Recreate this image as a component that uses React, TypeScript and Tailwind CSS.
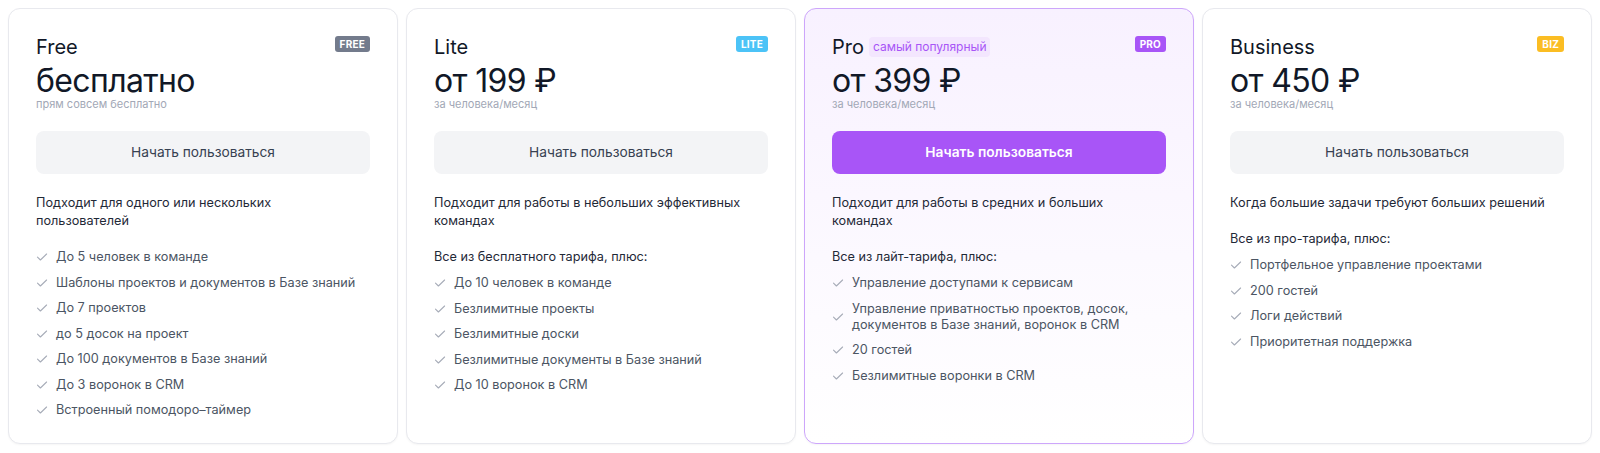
import React from "react";

type Plan = {
  name: string;
  badge: string;
  badgeClass: string;
  price: string;
  sub: string;
  desc: string;
  heading?: string;
  items: string[];
  pro?: boolean;
};

const plans: Plan[] = [
  {
    name: "Free",
    badge: "FREE",
    badgeClass: "bg-[#737b8c]",
    price: "бесплатно",
    sub: "прям совсем бесплатно",
    desc: "Подходит для одного или нескольких пользователей",
    items: [
      "До 5 человек в команде",
      "Шаблоны проектов и документов в Базе знаний",
      "До 7 проектов",
      "до 5 досок на проект",
      "До 100 документов в Базе знаний",
      "До 3 воронок в CRM",
      "Встроенный помодоро–таймер",
    ],
  },
  {
    name: "Lite",
    badge: "LITE",
    badgeClass: "bg-[#4cc3f7]",
    price: "от 199 ₽",
    sub: "за человека/месяц",
    desc: "Подходит для работы в небольших эффективных командах",
    heading: "Все из бесплатного тарифа, плюс:",
    items: [
      "До 10 человек в команде",
      "Безлимитные проекты",
      "Безлимитные доски",
      "Безлимитные документы в Базе знаний",
      "До 10 воронок в CRM",
    ],
  },
  {
    name: "Pro",
    badge: "PRO",
    badgeClass: "bg-[#a855f7]",
    price: "от 399 ₽",
    sub: "за человека/месяц",
    desc: "Подходит для работы в средних и больших командах",
    heading: "Все из лайт-тарифа, плюс:",
    items: [
      "Управление доступами к сервисам",
      "Управление приватностью проектов, досок, документов в Базе знаний, воронок в CRM",
      "20 гостей",
      "Безлимитные воронки в CRM",
    ],
    pro: true,
  },
  {
    name: "Business",
    badge: "BIZ",
    badgeClass: "bg-[#fbbd23]",
    price: "от 450 ₽",
    sub: "за человека/месяц",
    desc: "Когда большие задачи требуют больших решений",
    heading: "Все из про-тарифа, плюс:",
    items: [
      "Портфельное управление проектами",
      "200 гостей",
      "Логи действий",
      "Приоритетная поддержка",
    ],
  },
];

function Check() {
  return (
    <svg width="12" height="12" viewBox="0 0 12 12" fill="none" className="shrink-0">
      <path d="M1.5 6.2 L4.4 9 L10.6 3" stroke="#a7acb8" strokeWidth="1.1" strokeLinecap="round" strokeLinejoin="round" />
    </svg>
  );
}

function Card({ p }: { p: Plan }) {
  return (
    <div
      className={
        "h-full rounded-xl border px-[27px] pt-[24px] pb-6 flex flex-col shadow-[0_1px_2px_rgba(0,0,0,0.04)] " +
        (p.pro
          ? "border-[#cda6fb] bg-gradient-to-b from-[#f8f1ff] to-[#ffffff]"
          : "border-[#e8e9ee] bg-white")
      }
    >
      <div className="flex items-start justify-between h-[28px]">
        <div className="flex items-center gap-[5px]">
          <span className="text-[20px] leading-[28px] text-[#111827]">{p.name}</span>
          {p.pro && (
            <span className="text-[12px] leading-[20px] px-[4px] rounded-[4px] bg-[#f3e6fe] text-[#a855f7]">
              самый популярный
            </span>
          )}
        </div>
        <span
          className={
            "mt-[3px] text-[10px] font-bold leading-[16px] px-[5px] rounded-[3px] text-white tracking-[0.02em] " +
            p.badgeClass
          }
        >
          {p.badge}
        </span>
      </div>
      <div className="mt-[3px] text-[32px] leading-[34px] tracking-[-0.02em] text-[#111827]">{p.price}</div>
      <div className="-mt-[1px] text-[11px] leading-[14px] text-[#a2a8b6]">{p.sub}</div>
      <button
        className={
          "mt-[20px] h-[43px] w-full rounded-lg text-[13.75px] " +
          (p.pro ? "bg-[#a855f7] text-white font-semibold" : "bg-[#f3f4f6] text-[#374151]")
        }
      >
        Начать пользоваться
      </button>
      <div className="mt-[20px] max-w-[322px] text-[12.7px] leading-[18px] text-[#1f2937]">{p.desc}</div>
      <div className="mt-[19px]">
        {p.heading && (
          <div className="text-[12.7px] leading-[16px] text-[#1f2937] mb-[10px]">{p.heading}</div>
        )}
        <ul className="flex flex-col gap-[9.5px]">
          {p.items.map((it) => (
            <li key={it} className="flex items-center gap-[8px] text-[12.7px] leading-[16px] text-[#4b5563]">
              <Check />
              <span>{it}</span>
            </li>
          ))}
        </ul>
      </div>
    </div>
  );
}

export default function App() {
  return (
    <div
      className="w-[1600px] h-[453px] bg-white p-2 grid grid-cols-4 gap-2 items-start"
      style={{ fontFamily: "Inter, 'Noto Sans', sans-serif" }}
    >
      {plans.map((p) => (
        <div key={p.name} className="h-[436px]">
          <Card p={p} />
        </div>
      ))}
    </div>
  );
}
